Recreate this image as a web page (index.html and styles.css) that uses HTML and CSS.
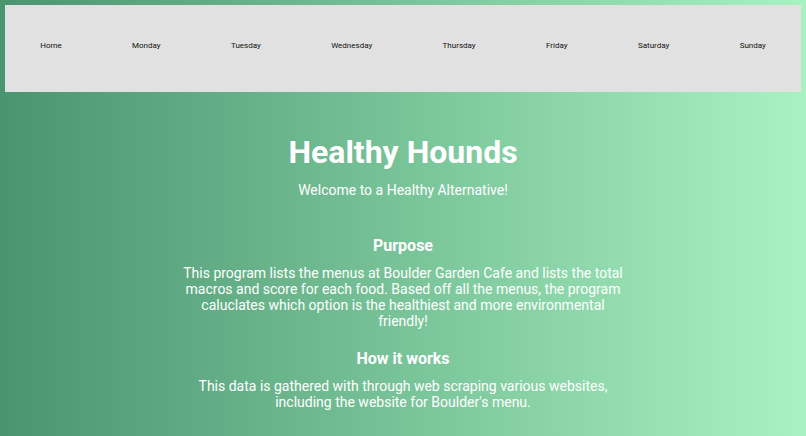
FILE: index.html
```html
<!DOCTYPE html>
<html>
<head>
<meta charset="utf-8">
<link rel="stylesheet" href="styles.css">
</head>
<body>
<nav class="nav">
  <a class="nav-link" href="#">Home</a>
  <a class="nav-link" href="#">Monday</a>
  <a class="nav-link" href="#">Tuesday</a>
  <a class="nav-link" href="#">Wednesday</a>
  <a class="nav-link" href="#">Thursday</a>
  <a class="nav-link" href="#">Friday</a>
  <a class="nav-link" href="#">Saturday</a>
  <a class="nav-link" href="#">Sunday</a>
</nav>
<main class="content">
  <h1 class="title">Healthy Hounds</h1>
  <p class="subtitle">Welcome to a Healthy Alternative!</p>
  <h2 class="section-title first">Purpose</h2>
  <p class="section-text">This program lists the menus at Boulder Garden Cafe and lists the total macros and score for each food. Based off all the menus, the program caluclates which option is the healthiest and more environmental friendly!</p>
  <h2 class="section-title">How it works</h2>
  <p class="section-text">This data is gathered with through web scraping various websites, including the website for Boulder's menu.</p>
</main>
</body>
</html>
```
FILE: styles.css
```css
html, body {
  margin: 0;
  padding: 0;
  height: 100%;
}
body {
  background: linear-gradient(to right, #4a9470, #a8f2c2);
  font-family: Roboto, "Liberation Sans", sans-serif;
  padding: 5px;
  box-sizing: border-box;
  overflow: hidden;
}
.nav {
  background: #e1e1e1;
  height: 87px;
  display: flex;
  justify-content: space-around;
  align-items: center;
  padding-bottom: 7px;
  box-sizing: border-box;
}
.nav-link {
  color: #111;
  text-decoration: none;
  font-size: 8px;
}
.content {
  color: #fff;
  text-align: center;
  max-width: 450px;
  margin: 0 auto;
}
.title {
  font-size: 32px;
  font-weight: 700;
  margin: 41px 0 0;
}
.subtitle {
  font-size: 14px;
  margin: 11px 0 0;
}
.section-title {
  font-size: 16px;
  font-weight: 700;
  margin: 20px 0 0;
}
.section-title.first {
  margin-top: 38px;
}
.section-text {
  font-size: 14px;
  margin: 10px 0 0;
}
```
